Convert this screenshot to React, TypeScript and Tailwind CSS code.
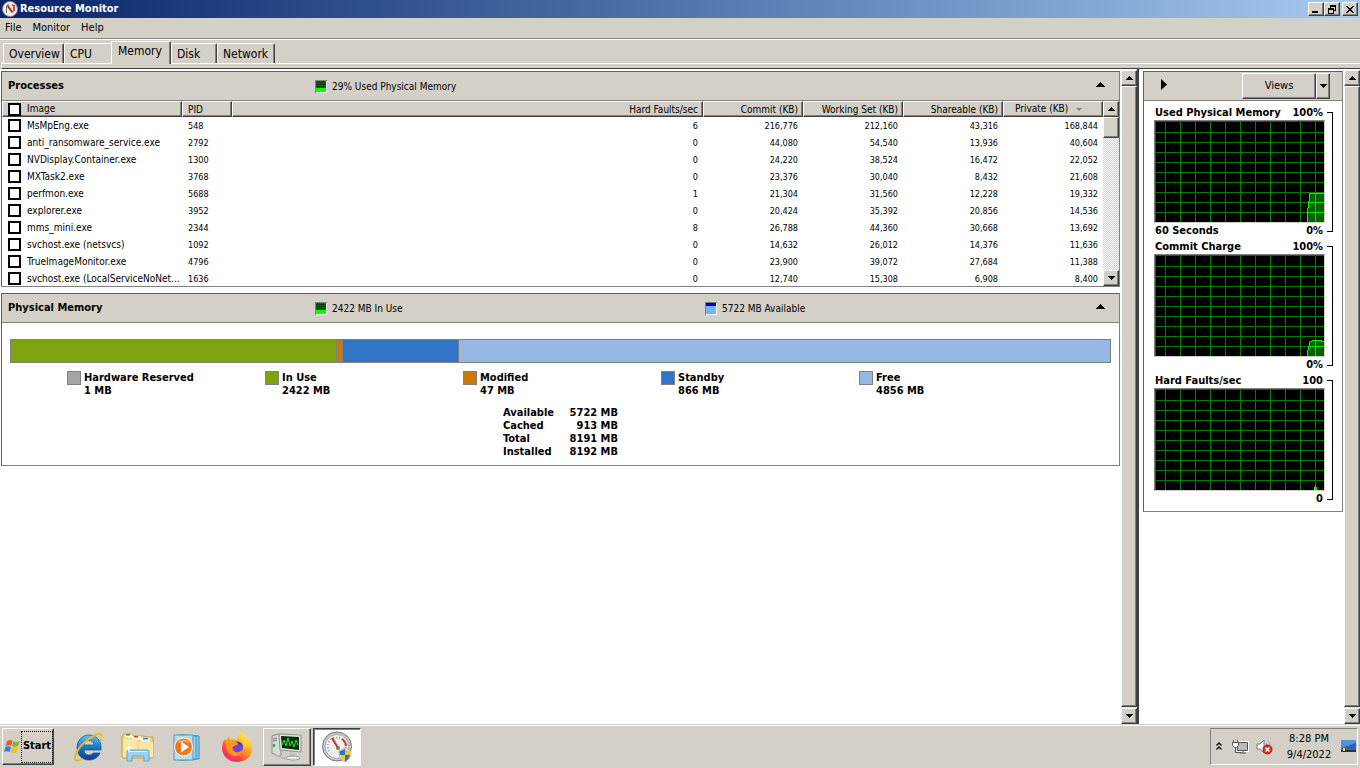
import React, { useState } from 'react';

const raised =
  'bg-[#d4d0c8] border border-t-white border-l-white border-r-[#404040] border-b-[#404040] shadow-[inset_-1px_-1px_0_#808080]';
const checkered =
  'bg-[repeating-conic-gradient(#d4d0c8_0_25%,#ffffff_0_50%)] bg-[length:2px_2px]';

const processes = [
  { image: 'MsMpEng.exe', pid: 548, faults: 6, commit: '216,776', working: '212,160', shareable: '43,316', priv: '168,844' },
  { image: 'anti_ransomware_service.exe', pid: 2792, faults: 0, commit: '44,080', working: '54,540', shareable: '13,936', priv: '40,604' },
  { image: 'NVDisplay.Container.exe', pid: 1300, faults: 0, commit: '24,220', working: '38,524', shareable: '16,472', priv: '22,052' },
  { image: 'MXTask2.exe', pid: 3768, faults: 0, commit: '23,376', working: '30,040', shareable: '8,432', priv: '21,608' },
  { image: 'perfmon.exe', pid: 5688, faults: 1, commit: '21,304', working: '31,560', shareable: '12,228', priv: '19,332' },
  { image: 'explorer.exe', pid: 3952, faults: 0, commit: '20,424', working: '35,392', shareable: '20,856', priv: '14,536' },
  { image: 'mms_mini.exe', pid: 2344, faults: 8, commit: '26,788', working: '44,360', shareable: '30,668', priv: '13,692' },
  { image: 'svchost.exe (netsvcs)', pid: 1092, faults: 0, commit: '14,632', working: '26,012', shareable: '14,376', priv: '11,636' },
  { image: 'TrueImageMonitor.exe', pid: 4796, faults: 0, commit: '23,900', working: '39,072', shareable: '27,684', priv: '11,388' },
  { image: 'svchost.exe (LocalServiceNoNet...', pid: 1636, faults: 0, commit: '12,740', working: '15,308', shareable: '6,908', priv: '8,400' },
];

const memory = [
  { name: 'Hardware Reserved', mb: 1, color: 'bg-[#a5a5a5]' },
  { name: 'In Use', mb: 2422, color: 'bg-[#7fa30c]' },
  { name: 'Modified', mb: 47, color: 'bg-[#cb7900]' },
  { name: 'Standby', mb: 866, color: 'bg-[#3174c5]' },
  { name: 'Free', mb: 4856, color: 'bg-[#97b8e3]' },
];

const totals = [
  ['Available', '5722 MB'],
  ['Cached', '913 MB'],
  ['Total', '8191 MB'],
  ['Installed', '8192 MB'],
];

const graphs = [
  { title: 'Used Physical Memory', max: '100%', min: '0%', span: '60 Seconds', line: '151,101 152,86 154,71.5 169,71.5' },
  { title: 'Commit Charge', max: '100%', min: '0%', span: '', line: '151,101 152,94 154,86 157,84.5 165,84.5 165,85.5 169,85.5' },
  { title: 'Hard Faults/sec', max: '100', min: '0', span: '', line: '157.5,101 159.5,96 161.5,101' },
];

const Arrow: React.FC<{ dir: 'up' | 'down' | 'right' }> = ({ dir }) => {
  if (dir === 'right') {
    return (
      <svg width="6" height="11" viewBox="0 0 6 11">
        <path d="M0 0L6 5.5L0 11Z" />
      </svg>
    );
  }
  return (
    <svg width="7" height="4" viewBox="0 0 7 4" shapeRendering="crispEdges">
      <path d={dir === 'up' ? 'M3 0h1v1h1v1h1v1h1v1H0V3h1V2h1V1h1z' : 'M0 0h7v1H6v1H5v1H4v1H3V3H2V2H1V1H0z'} />
    </svg>
  );
};

const ScrollBar: React.FC<{ label: string; short?: boolean }> = ({ label, short }) => (
  <div className={`flex w-4 shrink-0 flex-col ${checkered}`}>
    <button aria-label={`${label} up`} className={`flex h-4 shrink-0 items-center justify-center ${raised}`}>
      <Arrow dir="up" />
    </button>
    <div className={short ? `h-[21px] ${raised}` : `mb-px flex-1 ${raised}`} />
    {short && <div className="flex-1" />}
    <button aria-label={`${label} down`} className={`flex h-4 shrink-0 items-center justify-center ${raised}`}>
      <Arrow dir="down" />
    </button>
  </div>
);

const CheckBox: React.FC<{ label: string }> = ({ label }) => (
  <input
    type="checkbox"
    aria-label={label}
    className="block size-[13px] shrink-0 appearance-none border-2 border-black bg-white checked:bg-black"
  />
);

const Meter: React.FC<{ kind: 'used' | 'free' }> = ({ kind }) => (
  <svg width="12" height="13" viewBox="0 0 12 13" shapeRendering="crispEdges">
    <path d="M0 0h12v13H0z" fill="#fff" />
    <path d="M0 0h12v1H1v12H0z" fill="#808080" />
    <path d="M1 1h10v11H1z" fill="#6db5ff" />
    {kind === 'used' ? (
      <>
        <path d="M1 1h10v7H1z" fill="#0a7a0a" />
        <path d="M1 2.5h10M1 4.5h10M1 6.5h10" stroke="#034003" />
        <path d="M2.5 1v7M4.5 1v7M6.500 1v7M8.500 1v7" stroke="#034003" />
        <path d="M1 8h10v4H1z" fill="#00ff00" />
      </>
    ) : (
      <>
        <path d="M1 1h10v3H1z" fill="#00005a" />
        <path d="M1 2h1v1H1zM3 2h1v1H3zM5 2h1v1H5zM7 2h1v1H7zM9 2h1v1H9z" fill="#0000ff" />
      </>
    )}
  </svg>
);

const PanelHeader: React.FC<{ title: string; children: React.ReactNode }> = ({ title, children }) => (
  <div className="flex h-[29px] items-center border-b border-[#808080] bg-[#d4d0c8] pr-3.5">
    <h2 className="w-[313px] pl-1.5 text-[11px] font-bold">{title}</h2>
    {children}
    <button aria-label={`Collapse ${title}`} className="mb-1 ml-auto">
      <svg width="9" height="5" viewBox="0 0 9 5" shapeRendering="crispEdges">
        <path d="M4 0h1v1h1v1h1v1h1v1h1v1H0V4h1V3h1V2h1V1h1z" />
      </svg>
    </button>
  </div>
);

const panel = 'border border-t-[#606060] border-l-[#606060] border-r-[#808080] border-b-[#808080] bg-white';
const th =
  'h-4 border-t border-b border-t-white border-b-[#404040] bg-[#d4d0c8] border-l border-l-white border-r border-r-[#404040] p-0 pr-1 font-normal shadow-[inset_-1px_-1px_0_#808080]';

const ProcessTable = () => (
  <table className="min-w-0 flex-1 table-fixed border-separate border-spacing-0 self-start text-[10px] leading-4">
    <colgroup>
      <col className="w-[180px]" />
      <col className="w-[50px]" />
      <col />
      <col className="w-[100px]" />
      <col className="w-[100px]" />
      <col className="w-[100px]" />
      <col className="w-[100px]" />
    </colgroup>
    <thead>
      <tr>
        <th className={`${th} text-left`}>
          <div className="flex h-[14px] items-center gap-1.5 pl-[5px]">
            <CheckBox label="Select all processes" />
            Image
          </div>
        </th>
        <th className={`${th} text-left`}><div className="h-[14px] pl-[5px]">PID</div></th>
        <th className={`${th} text-right`}><div className="h-[14px]">Hard Faults/sec</div></th>
        <th className={`${th} text-right`}><div className="h-[14px]">Commit (KB)</div></th>
        <th className={`${th} text-right`}><div className="h-[14px]">Working Set (KB)</div></th>
        <th className={`${th} text-right`}><div className="h-[14px]">Shareable (KB)</div></th>
        <th className={`${th} text-left`}>
          <div className="flex h-[14px] items-center gap-2 pl-[11px]">
            Private (KB)
            <svg width="6" height="3" viewBox="0 0 6 3">
              <path d="M0 0h6L3 3z" fill="#808080" />
            </svg>
          </div>
        </th>
      </tr>
    </thead>
    <tbody>
      {processes.map((p) => (
        <tr key={p.pid} className="h-[17px]">
          <td className="p-0">
            <div className="flex items-center gap-1.5 pl-1.5 whitespace-nowrap">
              <CheckBox label={p.image} />
              {p.image}
            </div>
          </td>
          <td className="p-0 pl-1.5 text-[9px]">{p.pid}</td>
          <td className="p-0 pr-[5px] text-right text-[9px]">{p.faults}</td>
          <td className="p-0 pr-[5px] text-right text-[9px]">{p.commit}</td>
          <td className="p-0 pr-[5px] text-right text-[9px]">{p.working}</td>
          <td className="p-0 pr-[5px] text-right text-[9px]">{p.shareable}</td>
          <td className="p-0 pr-[5px] text-right text-[9px]">{p.priv}</td>
        </tr>
      ))}
    </tbody>
  </table>
);

const PhysicalMemory = () => {
  const total = memory.reduce((sum, m) => sum + m.mb, 0);
  return (
    <div className="px-2 pt-4 pb-[7px]">
      <div className="flex h-6 border border-[#808080]">
        {memory.slice(1).map((m, i) => (
          <div
            key={m.name}
            className={`${m.color} ${i > 0 ? 'border-l border-[#808080]' : ''}`}
            style={{ width: `${(m.mb / total) * 100}%` }}
          />
        ))}
      </div>
      <ul className="mt-2 flex pl-[57px] text-[11px] leading-[13px] font-bold">
        {memory.map((m) => (
          <li key={m.name} className="flex w-[198px] gap-[3px]">
            <span className={`size-[14px] border border-[#808080] ${m.color}`} />
            <span>
              {m.name}
              <br />
              {m.mb} MB
            </span>
          </li>
        ))}
      </ul>
      <dl className="mt-[9px] ml-[493px] w-[115px] text-[11px] leading-[13px] font-bold">
        {totals.map(([name, value]) => (
          <div key={name} className="flex justify-between">
            <dt>{name}</dt>
            <dd>{value}</dd>
          </div>
        ))}
      </dl>
    </div>
  );
};

const gridV = Array.from({ length: 11 }, (_, i) => `M${9.5 + i * 15} 0v100`).join('');
const gridH = Array.from({ length: 9 }, (_, i) => `M0 ${10.5 + i * 10}h168`).join('');

const Graph: React.FC<{ graph: (typeof graphs)[number]; id: string }> = ({ graph, id }) => (
  <div className="flex text-[11px] font-bold">
    <div className="w-[171px]">
      <div className="flex h-[15px] items-center justify-between pr-0.5 pl-px leading-[15px]">
        <h3>{graph.title}</h3>
        <span>{graph.max}</span>
      </div>
      <div className="border border-t-[#808080] border-r-[#d4d0c8] border-b-[#d4d0c8] border-l-[#808080]">
        <div className="border-t border-l border-[#404040]">
          <svg className="block" width="168" height="100" viewBox="0 0 168 100" shapeRendering="crispEdges">
            <clipPath id={id}>
              <polygon points={`${graph.line} 169,101`} />
            </clipPath>
            <path d="M0 0h168v100H0z" />
            <path d={gridV + gridH} stroke="#008000" />
            <g clipPath={`url(#${id})`}>
              <path d="M0 0h168v100H0z" fill="#006400" />
              <path d={gridV + gridH} stroke="#00e000" />
            </g>
            <polyline points={graph.line} fill="none" stroke="#00ff00" />
          </svg>
        </div>
      </div>
      <div className="flex h-4 items-center justify-between pr-0.5 pl-px leading-4">
        <span>{graph.span}</span>
        <span>{graph.min}</span>
      </div>
    </div>
    <div className="my-[7px] ml-0.5 w-1.5 border-y border-r border-black" />
  </div>
);

const TitleBar = () => (
  <header className="flex h-[18px] shrink-0 items-center bg-linear-to-r from-[#0a246a] to-[#a6caf0] px-0.5">
    <svg width="16" height="16" viewBox="0 0 16 16">
      <circle cx="8" cy="8" r="7.5" fill="#f2f2f2" stroke="#8a8a8a" />
      <path d="M4.500 12V5.500q0-1.500 2-2" fill="none" stroke="#666" />
      <path d="M5.500 4.500L10.500 11.500" stroke="#d01818" strokeWidth="2" />
      <path d="M10 4l2 .5v6" fill="none" stroke="#d01818" strokeWidth="1.500" />
    </svg>
    <h1 className="ml-0.5 text-[11px] font-bold text-white">Resource Monitor</h1>
    <div className="ml-auto flex">
      <button aria-label="Minimize" className={`flex h-[14px] w-4 items-end pb-0.5 pl-[3px] ${raised}`}>
        <span className="h-0.5 w-1.5 bg-black" />
      </button>
      <button aria-label="Restore" className={`flex h-[14px] w-4 items-center justify-center ${raised}`}>
        <svg width="8" height="9" viewBox="0 0 8 9" shapeRendering="crispEdges">
          <path d="M2 0h6v6H6V5h1V2H3v1H2zM0 3h6v6H0zM1 5v3h4V5z" fillRule="evenodd" />
        </svg>
      </button>
      <button aria-label="Close" className={`ml-0.5 flex h-[14px] w-4 items-center justify-center ${raised}`}>
        <svg width="8" height="7" viewBox="0 0 8 7" shapeRendering="crispEdges">
          <path d="M0 0h2v1h1v1h2V1h1V0h2v1H7v1H6v1H5v1h1v1h1v1h1v1H6V6H5V5H3v1H2v1H0V6h1V5h1V4h1V3H2V2H1V1H0z" />
        </svg>
      </button>
    </div>
  </header>
);

const tabs = [
  { name: 'Overview', width: 'w-[61px]' },
  { name: 'CPU', width: 'w-[47px]' },
  { name: 'Memory', width: 'w-[60px]' },
  { name: 'Disk', width: 'w-[46px]' },
  { name: 'Network', width: 'w-[58px]' },
];

const TabStrip = () => {
  const [active, setActive] = useState('Memory');
  return (
    <div className="shrink-0 border-t border-white bg-[#d4d0c8] pt-px">
      <div role="tablist" className="flex items-end pl-[3px] text-[12px] leading-4">
        {tabs.map((tab) => (
          <button
            key={tab.name}
            role="tab"
            aria-selected={active === tab.name}
            onClick={() => setActive(tab.name)}
            className={`${tab.width} rounded-t-[2px] border-t border-l border-white text-left ${
              active === tab.name
                ? 'z-10 -mb-px h-[23px] border-r border-r-[#404040] bg-[#d4d0c8] pb-1 pl-1.5 shadow-[inset_-1px_0_0_#808080]'
                : `h-5 pl-[5px] ${tab.name === 'CPU' ? '' : 'border-r border-r-[#404040] shadow-[inset_-1px_0_0_#808080]'}`
            }`}
          >
            {tab.name}
          </button>
        ))}
      </div>
      <div className="ml-px h-1.5 border-t border-b border-l border-white border-b-[#404040]" />
    </div>
  );
};

const SidePane = () => (
  <aside className="flex w-[223px] shrink-0 border-l-2 border-[#404040] bg-white pt-px">
    <div className="flex-1 pt-px pr-px pl-1">
      <div className={`${panel} pb-1`}>
        <div className="flex h-[29px] items-center border-b border-[#808080] bg-[#d4d0c8] pr-3 pl-[17px]">
          <button aria-label="Hide graphs" className="mb-1"><Arrow dir="right" /></button>
          <div className="ml-auto flex h-[26px] text-[11px]">
            <button className={`w-[74px] ${raised}`}>Views</button>
            <button aria-label="Choose view size" className={`flex w-[14px] items-center justify-center ${raised}`}>
              <Arrow dir="down" />
            </button>
          </div>
        </div>
        <div className="pt-1 pl-2.5">
          {graphs.map((g, i) => (
            <Graph key={g.title} graph={g} id={`graph${i}`} />
          ))}
        </div>
      </div>
    </div>
    <ScrollBar label="Scroll graphs" />
  </aside>
);

const StartLogo = () => (
  <svg width="17" height="17" viewBox="0 0 17 17">
    <path d="M3 3c2-1.300 4-1.200 5.500-.2L7.200 8C5.500 7 3.500 7 1.600 8z" fill="#ee5a24" />
    <path d="M9.300 3.200c2 1 4 1 6.500-.2l-1.500 5c-2 1.100-4.200 1-6.200.2z" fill="#7cb928" />
    <path d="M1.400 9c2-1.200 4-1 5.600 0l-1.300 4.900c-2-1-3.800-1-5.500 0z" fill="#2f83d6" />
    <path d="M7.800 9.300c2 1 4.200 1 6.200 0l-1.300 4.900c-2 1.200-4.200 1-6.200 0z" fill="#fbbf1c" />
  </svg>
);

const IeIcon = () => (
  <svg width="32" height="32" viewBox="0 0 32 32">
    <defs>
      <linearGradient id="ie" x1="0" y1="0" x2="0" y2="1">
        <stop offset="0" stopColor="#5cc4f2" />
        <stop offset=".5" stopColor="#1479c9" />
        <stop offset="1" stopColor="#0b3f8a" />
      </linearGradient>
    </defs>
    <path d="M17 4C9.500 4 5 10 5 17s5 12 12 12c5.500 0 9.500-3 11-7h-7c-1 1.500-2.300 2-4 2-3 0-5-2-5-5h17C30 10 25 4 17 4zm-5 10c.4-3 2.200-4.500 5-4.500s4.600 1.500 5 4.500z" fill="url(#ie)" stroke="#0d5095" strokeWidth=".7" />
    <path d="M28.500 10c2-5 1-8-3-6.500-9 2.500-20 13-22.500 22-1 5 3 5 8 2" fill="none" stroke="#f1b51c" strokeWidth="2" />
    <path d="M29 8c.5-3-1-4-4-3" fill="none" stroke="#fde38a" />
  </svg>
);

const ExplorerIcon = () => (
  <svg width="34" height="32" viewBox="0 0 34 32">
    <path d="M1 5l2-2h8l2 2h10l2 1h7v20l-2 1H2l-1-1z" fill="#f0d478" stroke="#c9a03c" />
    <path d="M4 3h7v4H4z" fill="#fff8dc" />
    <path d="M5 3h4v1.500H5z" fill="#13a538" />
    <path d="M11 5h9v4h-9z" fill="#fff8dc" />
    <path d="M13 5h4v1.500h-4z" fill="#dd3a1b" />
    <path d="M20 7h9v4h-9z" fill="#fff8dc" />
    <path d="M22 7h5v1.500h-5z" fill="#2a8fe5" />
    <path d="M2 8h13l2 3h15v15H2z" fill="#f9e7a2" />
    <path d="M17 11v15" stroke="#e8cf80" />
    <path d="M6 30V21q0-2 2-2h18q2 0 2 2v9h-5v-5H11v5z" fill="#9bd2f1" stroke="#5ba7d2" />
    <path d="M8 20.500h18" stroke="#e3f5ff" />
    <path d="M8 13l1 3 3 1-3 1-1 4-1-4-3-1 3-1z" fill="#fff" />
  </svg>
);

const MediaIcon = () => (
  <svg width="32" height="32" viewBox="0 0 32 32">
    <path d="M9 4l18 1v23l-18 1z" fill="#8cc6e4" stroke="#3c8fbb" />
    <path d="M6 4l18 1v23l-18 1z" fill="#a8d5ec" stroke="#3c8fbb" />
    <path d="M2 4h19v25H2z" fill="#b9ddf0" stroke="#4896c0" />
    <circle cx="11.500" cy="16" r="9" fill="#f07818" stroke="#fff" />
    <path d="M5 12a8 8 0 0 1 13 0q-6-2-13 0z" fill="#fba95a" />
    <path d="M9 10.500l8 5.500-8 5.500z" fill="#fff" />
  </svg>
);

const FirefoxIcon = () => (
  <svg width="32" height="32" viewBox="0 0 32 32">
    <defs>
      <linearGradient id="fox" x1=".85" y1=".1" x2=".2" y2="1">
        <stop offset="0" stopColor="#fff14a" />
        <stop offset=".4" stopColor="#ffa01f" />
        <stop offset=".7" stopColor="#ff4a3c" />
        <stop offset="1" stopColor="#e91e8c" />
      </linearGradient>
    </defs>
    <path d="M19 1c4 2 6 4 7 7l1-1c3 3 4 7 4 11 0 8-7 13-15 13S1 25 1 17c0-4 1-7 3-9l1 2 3-5 1 4c3-1 5-1 7 0 0-3 1-6 3-8z" fill="url(#fox)" />
    <circle cx="16" cy="16.500" r="6" fill="#7540e0" />
    <path d="M15 10.500c4 0 7 3 7 6-2-3-4-4-7-4z" fill="#4c2aa8" />
    <path d="M5 10c4-2 8-1 12 2 0 2-2 2-4 3s-2 3 0 5 5 2 8-1c-1 4-3 6-7 6-6 0-10-6-9-15z" fill="#ff961c" />
    <path d="M19 1c-3 5 5 8 4 16 4-4 3-9 0-12z" fill="#ffd83b" />
  </svg>
);

const TaskManagerIcon = () => (
  <svg width="32" height="30" viewBox="0 0 32 30">
    <path d="M1 4l6-2 3 1v20l-3 1-6-3z" fill="#d8d8d8" stroke="#8a8a8a" />
    <path d="M2 7l4-1M2 9l4-1" stroke="#777" />
    <path d="M2 12h2v3H2z" fill="#20c020" />
    <path d="M8 2l22 1v17L9 18z" fill="#e4e4e4" stroke="#8e8e8e" />
    <path d="M10 4l18 1v13l-17-2z" fill="#082808" />
    <path d="M11 9h17M11 13h17M16 5v12M22 5v12" stroke="#176b1c" strokeWidth=".5" />
    <path d="M11 13l2-5 2 6 2-8 2 8 2-5 2 6 2-7 2 5" fill="none" stroke="#2ddc3a" />
    <path d="M19 20l5 1 1 4h-7z" fill="#c2c2c2" />
    <ellipse cx="22" cy="26" rx="7" ry="2" fill="#ececec" stroke="#999" />
    <path d="M4 23l11 4" stroke="#bbb" strokeWidth="2" />
  </svg>
);

const GaugeIcon = () => (
  <svg width="32" height="32" viewBox="0 0 32 32">
    <circle cx="16" cy="15.500" r="14.500" fill="#c8c8c8" stroke="#777" />
    <circle cx="16" cy="15.500" r="12" fill="#f0f0ee" stroke="#aaa" />
    <path d="M8 20a9 9 0 1 1 16-1" fill="none" stroke="#999" strokeWidth="2" strokeDasharray="1 2" />
    <path d="M21 8a9 9 0 0 1 4 7" fill="none" stroke="#c43a35" strokeWidth="2" />
    <path d="M11 7l6 10" stroke="#d3261d" strokeWidth="2" />
    <circle cx="17" cy="17" r="2" fill="#777" />
    <path d="M18 20l6-3 6 3c0 6-2 9-6 11-4-2-6-5-6-11z" fill="#fff" stroke="#888" strokeWidth=".6" />
    <path d="M24 18v6h-5c-.5-1-.5-2-.5-3.500zM24 24h5c-.5 3-2 5-5 6.500z" fill="#2d6fc9" />
    <path d="M24 18v6h5c.5-1 .5-2 .5-3.500zM24 24h-5c.5 3 2 5 5 6.500z" fill="#fcc81b" />
  </svg>
);

const Tray = () => (
  <div className="my-[3px] mr-0.5 flex w-[148px] items-center border border-t-[#808080] border-r-white border-b-white border-l-[#808080] pl-[5px] text-[11px] leading-4">
    <button aria-label="Show hidden icons">
      <svg width="6" height="9" viewBox="0 0 6 9">
        <path d="M.5 3.500L3 1l2.500 2.500M.5 7.500L3 5l2.500 2.500" fill="none" stroke="#000" strokeWidth="1.300" />
      </svg>
    </button>
    <svg className="ml-2.5" width="17" height="16" viewBox="0 0 17 16">
      <path d="M5 3h11v9H5z" fill="#d4d0c8" stroke="#fff" strokeWidth="2" />
      <path d="M5.500 3.500h10v8h-10z" fill="#bcbcb6" stroke="#555" />
      <path d="M8 14h6M3.500 8v5.500H9M11 12v2" fill="none" stroke="#555" />
      <path d="M1.500 1v2M5.500 1v2" stroke="#555" />
      <path d="M.5 3.500h6v3l-2 2h-2l-2-2z" fill="#fff" stroke="#555" />
    </svg>
    <svg className="ml-[7px]" width="17" height="17" viewBox="0 0 17 17">
      <path d="M1 6h3l4-4v13l-4-4H1z" fill="#fff" stroke="#777" />
      <path d="M10 5q2 2 0 6M12 3q3 3 2 6" fill="none" stroke="#aaa" />
      <circle cx="11.500" cy="11.500" r="4.500" fill="#dc2d24" stroke="#b01812" />
      <path d="M9.500 9.500l4 4M13.500 9.500l-4 4" stroke="#fff" strokeWidth="1.500" />
    </svg>
    <div className="ml-3 w-12 text-center">
      8:28 PM
      <br />
      9/4/2022
    </div>
    <button aria-label="Show desktop" className="ml-2">
      <svg width="15" height="13" viewBox="0 0 15 13">
        <path d="M0 0h15v10H0z" fill="#2465b8" />
        <path d="M0 0h15v3L0 8z" fill="#4d94dd" />
        <path d="M0 10h15v2H0z" fill="#333" />
        <path d="M2 8h2v3H2z" fill="#ffd34d" />
      </svg>
    </button>
  </div>
);

const TaskBar = () => (
  <footer className="flex h-11 shrink-0 border-t border-[#d4d0c8] bg-[#d4d0c8] shadow-[inset_0_1px_0_#ffffff]">
    <button className={`my-[3px] ml-0.5 flex w-[52px] items-center pl-px text-[11px] font-bold ${raised}`}>
      <StartLogo />
      <span className="flex h-8 w-8 items-center justify-center border border-dotted border-black">Start</span>
    </button>
    <nav className="ml-[18px] flex items-center">
      <button aria-label="Internet Explorer" className="w-[49px]"><IeIcon /></button>
      <button aria-label="Windows Explorer" className="w-[51px]"><ExplorerIcon /></button>
      <button aria-label="Media Player" className="w-[49px]"><MediaIcon /></button>
      <button aria-label="Firefox" className="w-[42px]"><FirefoxIcon /></button>
      <button aria-label="Task Manager" className={`flex h-[38px] w-12 items-center justify-center ${raised}`}>
        <TaskManagerIcon />
      </button>
      <button
        aria-label="Resource Monitor"
        className="ml-0.5 flex h-[38px] w-12 items-center justify-center border border-t-[#404040] border-r-white border-b-white border-l-[#404040] bg-white shadow-[inset_1px_1px_0_#808080]"
      >
        <GaugeIcon />
      </button>
    </nav>
    <div className="ml-auto flex"><Tray /></div>
  </footer>
);

export default function App() {
  return (
    <div className="flex h-screen flex-col bg-[#d4d0c8] font-['DejaVu_Sans_Condensed','DejaVu_Sans',sans-serif] text-black">
      <TitleBar />
      <nav className="flex h-[21px] shrink-0 items-center gap-[11px] border-b border-[#808080] pl-[5px] text-[11px]">
        <button>File</button>
        <button>Monitor</button>
        <button>Help</button>
      </nav>
      <TabStrip />
      <div className="flex min-h-0 flex-1">
        <main className="flex min-w-0 flex-1 bg-white pt-px">
          <div className="min-w-0 flex-1 px-px pt-px">
            <section className={panel}>
              <PanelHeader title="Processes">
                <Meter kind="used" />
                <span className="ml-[5px] text-[10px]">29% Used Physical Memory</span>
              </PanelHeader>
              <div className="flex h-[185px] overflow-hidden">
                <ProcessTable />
                <ScrollBar label="Scroll processes" short />
              </div>
            </section>
            <section className={`mt-1.5 ${panel}`}>
              <PanelHeader title="Physical Memory">
                <Meter kind="used" />
                <span className="ml-[5px] w-[373px] text-[10px]">2422 MB In Use</span>
                <Meter kind="free" />
                <span className="ml-[5px] text-[10px]">5722 MB Available</span>
              </PanelHeader>
              <PhysicalMemory />
            </section>
          </div>
          <ScrollBar label="Scroll panels" />
        </main>
        <SidePane />
      </div>
      <TaskBar />
    </div>
  );
}
